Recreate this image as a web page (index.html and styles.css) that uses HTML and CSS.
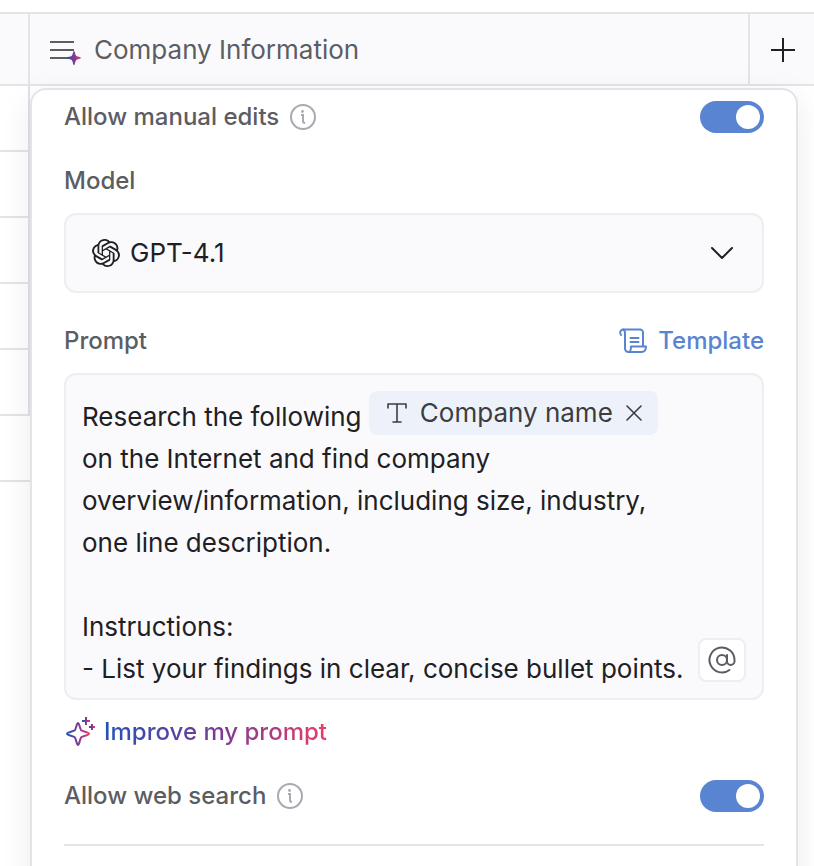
FILE: index.html
```
<!DOCTYPE html>
<html lang="en">
<head>
    <meta charset="UTF-8">
    <meta name="viewport" content="width=device-width, initial-scale=1.0">
    <title>Company Information</title>
    <link rel="stylesheet" href="styles.css">
</head>
<body>
    <div class="page">
        <table class="sheet">
            <colgroup>
                <col class="col-first">
                <col>
                <col class="col-add">
            </colgroup>
            <thead>
                <tr>
                    <td></td>
                    <th scope="col">
                        <div class="column-title">
                            <svg width="32" height="30" viewBox="0 0 32 30" aria-hidden="true">
                                <defs>
                                    <linearGradient id="spark" x1="0" x2="1" y1="0" y2="0">
                                        <stop offset="0" stop-color="#2451b8"/>
                                        <stop offset="0.5" stop-color="#7f3a93"/>
                                        <stop offset="1" stop-color="#e83e68"/>
                                    </linearGradient>
                                </defs>
                                <path d="M0 8H24M0 16H24M0 24H19" fill="none" stroke="#5c5d63" stroke-width="2"/>
                                <path d="M24 17C25 17 25.2 21 26.2 21.8C27 22.8 31 23 31 24C31 25 27 25.2 26.2 26.2C25.2 27 25 31 24 31C23 31 22.8 27 21.8 26.2C21 25.2 17 25 17 24C17 23 21 22.8 21.8 21.8C22.8 21 23 17 24 17Z" fill="url(#spark)"/>
                            </svg>
                            <span>Company Information</span>
                        </div>
                    </th>
                    <td>
                        <button class="add-column" type="button" aria-label="Add column">
                            <svg width="26" height="26" viewBox="0 0 26 26" fill="none" stroke="#1f2023" stroke-width="2">
                                <path d="M2 14H26M14 2V26"/>
                            </svg>
                        </button>
                    </td>
                </tr>
            </thead>
            <tbody>
                <tr><td class="edge"></td><td></td></tr>
                <tr><td class="edge"></td><td></td></tr>
                <tr><td class="edge"></td><td></td></tr>
                <tr><td class="edge"></td><td></td></tr>
                <tr><td class="edge"></td><td></td></tr>
                <tr><td></td><td></td></tr>
            </tbody>
        </table>

        <form class="panel">
            <div class="row">
                <label class="label" for="manual">Allow manual edits</label>
                <svg class="info" width="28" height="28" viewBox="0 0 28 28">
                    <circle cx="14" cy="14" r="12"/>
                    <path d="M12 12H14V18Q14 20 16 20"/>
                    <circle class="dot" cx="13.5" cy="8.5" r="1.4"/>
                </svg>
                <input class="toggle" type="checkbox" id="manual" checked>
            </div>

            <div class="field">
                <label class="label" for="model">Model</label>
                <div class="select">
                    <select id="model">
                        <option>GPT-4.1</option>
                    </select>
                    <svg class="model-logo" width="28" height="28" viewBox="0 0 24 24" fill="#1f2023" aria-hidden="true">
                        <path d="M22.2819 9.8211a5.9847 5.9847 0 0 0-.5157-4.9108 6.0462 6.0462 0 0 0-6.5098-2.9A6.0651 6.0651 0 0 0 4.9807 4.1818a5.9847 5.9847 0 0 0-3.9977 2.9 6.0462 6.0462 0 0 0 .7427 7.0966 5.98 5.98 0 0 0 .511 4.9107 6.051 6.051 0 0 0 6.5146 2.9001A5.9847 5.9847 0 0 0 13.2599 24a6.0557 6.0557 0 0 0 5.7718-4.2058 5.9894 5.9894 0 0 0 3.9977-2.9001 6.0557 6.0557 0 0 0-.7475-7.0729zm-9.022 12.6081a4.4755 4.4755 0 0 1-2.8764-1.0408l.1419-.0804 4.7783-2.7582a.7948.7948 0 0 0 .3927-.6813v-6.7369l2.02 1.1686a.071.071 0 0 1 .038.052v5.5826a4.504 4.504 0 0 1-4.4945 4.4944zm-9.6607-4.1254a4.4708 4.4708 0 0 1-.5346-3.0137l.142.0852 4.783 2.7582a.7712.7712 0 0 0 .7806 0l5.8428-3.3685v2.3324a.0804.0804 0 0 1-.0332.0615L9.74 19.9502a4.4992 4.4992 0 0 1-6.1408-1.6464zM2.3408 7.8956a4.485 4.485 0 0 1 2.3655-1.9728V11.6a.7664.7664 0 0 0 .3879.6765l5.8144 3.3543-2.0201 1.1685a.0757.0757 0 0 1-.071 0l-4.8303-2.7865A4.504 4.504 0 0 1 2.3408 7.872zm16.5963 3.8558L13.1038 8.364 15.1192 7.2a.0757.0757 0 0 1 .071 0l4.8303 2.7913a4.4944 4.4944 0 0 1-.6765 8.1042v-5.6772a.79.79 0 0 0-.407-.667zm2.0107-3.0231l-.142-.0852-4.7735-2.7818a.7759.7759 0 0 0-.7854 0L9.409 9.2297V6.8974a.0662.0662 0 0 1 .0284-.0615l4.8303-2.7866a4.4992 4.4992 0 0 1 6.6802 4.66zM8.3065 12.863l-2.02-1.1638a.0804.0804 0 0 1-.038-.0567V6.0742a4.4992 4.4992 0 0 1 7.3757-3.4537l-.142.0805L8.704 5.459a.7948.7948 0 0 0-.3927.6813zm1.0976-2.3654l2.602-1.4998 2.6069 1.4998v2.9994l-2.5974 1.4997-2.6067-1.4997Z"/>
                    </svg>
                    <svg class="chevron" width="24" height="24" viewBox="0 0 24 24" fill="none" stroke="#1f2023" stroke-width="2" stroke-linecap="round" stroke-linejoin="round" aria-hidden="true">
                        <path d="M2 7L12 17L22 7"/>
                    </svg>
                </div>
            </div>

            <div class="field">
                <div class="row">
                    <span class="label" id="prompt-label">Prompt</span>
                    <button class="template" type="button">
                        <svg width="30" height="26" viewBox="0 0 30 26" fill="none" stroke="currentColor" stroke-width="2" stroke-linecap="round" stroke-linejoin="round" aria-hidden="true">
                            <path d="M3 7C1 4.5 2.5 1.5 5.5 1.5H22A3 3 0 0 1 25 4.5V18"/>
                            <path d="M5 1.5C7 2 7 3.5 7 5V20.5A3.5 3.5 0 0 0 10.5 24H23.5C26.500 24 28 22 28 18.5H13C13 21.500 12.500 24 10.5 24"/>
                            <path d="M12.5 10H20.5M12.5 14H20.5"/>
                        </svg>
                        Template
                    </button>
                </div>
                <div class="prompt-box">
                    <div class="editor" contenteditable="true" role="textbox" aria-multiline="true" aria-labelledby="prompt-label" spellcheck="false">Research the following <span class="chip" contenteditable="false"><svg width="20" height="20" viewBox="0 0 20 20" fill="none" stroke="currentColor" stroke-width="1.6" aria-hidden="true"><path d="M1 5V1H19V5M10 1V19M6 19H14" stroke-linecap="round" stroke-linejoin="round"/></svg>Company name<button type="button" aria-label="Remove Company name"><svg width="16" height="16" viewBox="0 0 16 16" fill="none" stroke="currentColor" stroke-width="1.6" stroke-linecap="round"><path d="M1 1L15 15M15 1L1 15"/></svg></button></span> on the Internet and find company overview/information, including size, industry, one line description.<br><br>Instructions:<br>- List your findings in clear, concise bullet points.</div>
                    <button class="mention" type="button" aria-label="Insert column">
                        <svg width="30" height="30" viewBox="0 0 24 24" fill="none" stroke="#5c5d63" stroke-width="1.6" stroke-linecap="round" stroke-linejoin="round">
                            <circle cx="12" cy="12" r="4"/>
                            <path d="M16 8v5a3 3 0 0 0 6 0v-1a10 10 0 1 0-4 8"/>
                        </svg>
                    </button>
                </div>
                <button class="improve" type="button">
                    <svg width="32" height="32" viewBox="0 0 32 32" fill="none" stroke="url(#spark)" stroke-width="2" stroke-linejoin="round" aria-hidden="true">
                        <path d="M14 7C15.3 7 15.8 12.5 17.2 14.3C19 15.7 25 16.2 25 17.8C25 19.3 19 19.9 17.2 21.3C15.8 23 15.3 29 14 29C12.7 29 12.2 23 10.8 21.3C9 19.9 3 19.3 3 17.8C3 16.2 9 15.7 10.8 14.3C12.2 12.5 12.7 7 14 7Z"/>
                        <path d="M22 1V9M18 5H26"/>
                        <path d="M28 8V14M25 11H31"/>
                    </svg>
                    <span>Improve my prompt</span>
                </button>
            </div>

            <div class="row">
                <label class="label" for="search">Allow web search</label>
                <svg class="info" width="28" height="28" viewBox="0 0 28 28">
                    <circle cx="14" cy="14" r="12"/>
                    <path d="M12 12H14V18Q14 20 16 20"/>
                    <circle class="dot" cx="13.5" cy="8.5" r="1.4"/>
                </svg>
                <input class="toggle" type="checkbox" id="search" checked>
            </div>

            <hr>
        </form>
    </div>
</body>
</html>
```

FILE: styles.css
```
* {
    box-sizing: border-box;
}

body {
    margin: 0;
    background: #fff;
    color: #1f2023;
    font-family: Inter, "Liberation Sans", sans-serif;
    font-size: 26px;
}

button,
select {
    margin: 0;
    padding: 0;
    border: none;
    background: none;
    color: inherit;
    font: inherit;
    cursor: pointer;
}

svg {
    display: block;
    flex: none;
    overflow: visible;
}

.page {
    position: relative;
    min-height: 100vh;
    padding-top: 12px;
    overflow: hidden;
}

/* Spreadsheet behind the panel */
.sheet {
    width: 100%;
    table-layout: fixed;
    border-collapse: separate;
    border-spacing: 0;
}

.col-first {
    width: 30px;
}

.col-add {
    width: 64px;
}

.sheet th,
.sheet td {
    height: 66px;
    padding: 0;
    border-bottom: 2px solid #e3e3e8;
}

.sheet thead th,
.sheet thead td {
    height: 74px;
    border-top: 2px solid #e3e3e8;
    border-right: 2px solid #e3e3e8;
    background: #fafafc;
}

.sheet thead td:last-child {
    border-right: none;
}

.sheet .edge {
    border-right: 2px solid #e0e0e8;
}

.column-title {
    display: flex;
    align-items: center;
    gap: 12px;
    padding-left: 20px;
    color: #5c5d63;
    font-weight: 400;
}

.add-column {
    display: flex;
    margin: 0 auto;
}

/* Settings panel */
.panel {
    position: absolute;
    top: 88px;
    right: 16px;
    bottom: -32px;
    left: 30px;
    display: flex;
    flex-direction: column;
    gap: 32px;
    padding: 11px 32px;
    border: 2px solid #e3e3e8;
    border-radius: 16px;
    background: #fff;
    box-shadow: 0 8px 32px rgba(0, 0, 0, 0.08);
}

.row {
    display: flex;
    align-items: center;
    gap: 10px;
}

.field {
    display: flex;
    flex-direction: column;
    gap: 16px;
}

.label {
    color: #5c5d63;
    font-size: 24px;
    font-weight: 500;
    line-height: 32px;
}

.info {
    fill: none;
    stroke: #a9a9b1;
    stroke-width: 2;
}

.info .dot {
    fill: #a9a9b1;
    stroke: none;
}

.toggle {
    appearance: none;
    width: 64px;
    height: 32px;
    margin: 0 0 0 auto;
    padding: 4px;
    border-radius: 16px;
    background: #c9c9d0;
    cursor: pointer;
}

.toggle::before {
    content: "";
    display: block;
    width: 24px;
    height: 24px;
    border-radius: 50%;
    background: #fff;
}

.toggle:checked {
    background: #5984d1;
}

.toggle:checked::before {
    margin-left: auto;
}

/* Logo and chevron share the grid cell of the select */
.select {
    display: grid;
    align-items: center;
}

.select > * {
    grid-area: 1 / 1;
}

.select select {
    appearance: none;
    width: 100%;
    height: 80px;
    padding: 0 64px 2px;
    border: 2px solid #eeeef2;
    border-radius: 12px;
    background: #fafafc;
}

.model-logo,
.chevron {
    pointer-events: none;
}

.model-logo {
    margin-left: 28px;
}

.chevron {
    justify-self: end;
    margin-right: 30px;
}

.template {
    display: flex;
    align-items: center;
    gap: 10px;
    margin-left: auto;
    color: #5984d1;
    font-size: 24px;
    font-weight: 500;
    line-height: 32px;
}

.prompt-box {
    position: relative;
    border: 2px solid #eeeef2;
    border-radius: 12px;
    background: #fafafc;
}

.editor {
    padding: 21px 72px 8px 16px;
    line-height: 42px;
    outline: none;
}

.chip {
    display: inline-flex;
    align-items: center;
    gap: 13px;
    height: 44px;
    margin: -5px 0 3px;
    padding: 0 16px 0 18px;
    border-radius: 8px;
    background: #edf2fa;
    color: #3c3d40;
    vertical-align: bottom;
}

.mention {
    position: absolute;
    right: 16px;
    bottom: 16px;
    display: flex;
    align-items: center;
    justify-content: center;
    width: 48px;
    height: 44px;
    border: 2px solid #eeeef2;
    border-radius: 8px;
    background: #fff;
}

.improve {
    display: flex;
    align-items: center;
    align-self: flex-start;
    gap: 8px;
    font-size: 24px;
    font-weight: 500;
    line-height: 32px;
}

.improve span {
    background: linear-gradient(90deg, #2451b8, #7f3a93 55%, #e83e68);
    background-clip: text;
    color: transparent;
}

hr {
    width: 100%;
    margin: 0;
    border: none;
    border-top: 2px solid #e3e3e8;
}
```
